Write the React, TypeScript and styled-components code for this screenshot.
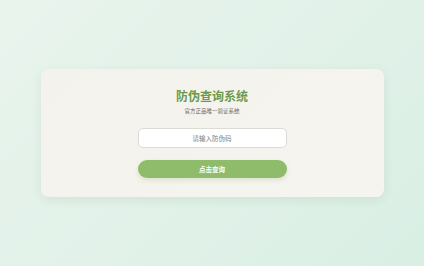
import styled, { createGlobalStyle } from "styled-components";

const GlobalStyle = createGlobalStyle`
  html, body {
    margin: 0;
    padding: 0;
  }
  body {
    font-family: "Noto Sans CJK SC", "Noto Sans", sans-serif;
    background: linear-gradient(135deg, #e9f4ed 0%, #e0f1e8 60%, #d9efe4 100%);
    min-height: 100vh;
  }
`;

const Page = styled.div`
  height: 266px;
  display: flex;
  align-items: center;
  justify-content: center;
`;

const Card = styled.div`
  width: 343px;
  box-sizing: border-box;
  padding: 19px 0;
  border-radius: 8px;
  background: linear-gradient(135deg, #f4f2ec 0%, #f6f4ef 100%);
  box-shadow: 0 3px 10px rgba(90, 120, 90, 0.12);
  display: flex;
  flex-direction: column;
  align-items: center;
`;

const Title = styled.h1`
  margin: 0;
  font-size: 12px;
  line-height: 16px;
  font-weight: 700;
  color: #6b9a4a;
`;

const Subtitle = styled.p`
  margin: 3px 0 0;
  font-size: 5.5px;
  line-height: 8px;
  color: #6a6a68;
`;

const CodeInput = styled.input`
  margin-top: 13px;
  width: 149px;
  height: 20px;
  box-sizing: border-box;
  border: 1px solid #dcdcd6;
  border-radius: 5px;
  background: #fff;
  text-align: center;
  font-family: inherit;
  font-size: 6.5px;
  color: #555;
  outline: none;
  &::placeholder {
    color: #808080;
  }
`;

const SubmitButton = styled.button`
  margin-top: 12px;
  width: 149px;
  height: 18px;
  border: none;
  border-radius: 9px;
  background: #8ebc6a;
  color: #fff;
  font-family: "Noto Sans CJK SC", serif;
  font-size: 6.5px;
  font-weight: 700;
  box-shadow: 0 2px 5px rgba(110, 150, 80, 0.2);
  cursor: pointer;
`;

export default function App() {
  return (
    <>
      <GlobalStyle />
      <Page>
        <Card>
          <Title>防伪查询系统</Title>
          <Subtitle>官方正品唯一验证系统</Subtitle>
          <CodeInput placeholder="请输入防伪码" />
          <SubmitButton>点击查询</SubmitButton>
        </Card>
      </Page>
    </>
  );
}
